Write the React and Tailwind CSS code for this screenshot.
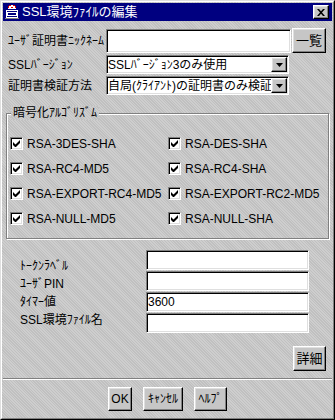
import React from "react";

const raised =
  "bg-[#c6c6c6] border border-t-white border-l-white border-r-black border-b-black shadow-[inset_-1px_-1px_0_#808080,inset_1px_1px_0_#dfdfdf]";
const sunken =
  "bg-white border border-t-[#808080] border-l-[#808080] border-r-white border-b-white shadow-[inset_1px_1px_0_#000,inset_-1px_-1px_0_#dfdfdf]";
const texture =
  "bg-[#c6c6c6] bg-[repeating-linear-gradient(45deg,#c0c0c0_0px,#c0c0c0_1px,#cecece_1px,#cecece_2px)]";

const ciphers = [
  ["RSA-3DES-SHA", "RSA-DES-SHA"],
  ["RSA-RC4-MD5", "RSA-RC4-SHA"],
  ["RSA-EXPORT-RC4-MD5", "RSA-EXPORT-RC2-MD5"],
  ["RSA-NULL-MD5", "RSA-NULL-SHA"],
];

const TitleIcon = () => (
  <svg width="16" height="16" viewBox="0 0 16 16" shapeRendering="crispEdges">
    <path d="M5 1h6v1h1v3H4V2h1z" fill="#fff" />
    <path d="M5 1h2v1H5zM9 1h2v1H9zM4 2h1v2H4zM11 2h1v2h-1zM7 3h2v1H7z" fill="#e00000" />
    <rect x="2" y="5" width="12" height="9" fill="#fff" />
    <rect x="2" y="5" width="12" height="1" fill="#000080" />
    <rect x="3" y="7" width="10" height="1" fill="#000080" />
    <rect x="4" y="9" width="8" height="2" fill="#000080" />
    <rect x="3" y="12" width="10" height="1" fill="#000080" />
    <rect x="1" y="14" width="14" height="1" fill="#808080" />
  </svg>
);

const Checkbox = ({ label }) => (
  <div className="flex items-center gap-[4px] h-[25px]">
    <div className={`w-[13px] h-[13px] ${sunken} flex items-center justify-center`}>
      <svg width="7" height="7" viewBox="0 0 7 7">
        <path d="M0 2v3l2 2h1l4-4V0L2.5 4.5z" fill="#000" />
      </svg>
    </div>
    <span className="text-[12px] leading-[14px] text-black">{label}</span>
  </div>
);

const Select = ({ value }) => (
  <div className={`w-[183px] h-[19px] ${sunken} flex items-center pl-[1px] pr-[1px]`}>
    <span className="flex-1 text-[12px] leading-[14px] whitespace-nowrap overflow-hidden">{value}</span>
    <div className={`w-[16px] h-[15px] ${raised} flex items-center justify-center shrink-0`}>
      <svg width="7" height="4" viewBox="0 0 7 4">
        <path d="M0 0h7L3.5 4z" fill="#000" />
      </svg>
    </div>
  </div>
);

export default function App() {
  return (
    <div className="w-[335px] h-[420px] border border-t-[#dfdfdf] border-l-[#dfdfdf] border-r-black border-b-black font-['Liberation_Sans','Noto_Sans_CJK_JP',sans-serif] text-black select-none">
      <div className={`h-full border border-t-white border-l-white border-r-[#808080] border-b-[#808080] p-px flex flex-col ${texture}`}>
        {/* title bar */}
        <div className="h-[18px] bg-[#000080] flex items-center pl-px pr-[3px]">
          <TitleIcon />
          <span className="ml-[2px] text-white text-[13px] leading-[14px] flex-1">SSL環境ﾌｧｲﾙの編集</span>
          <div className={`w-[16px] h-[14px] ${raised} flex items-center justify-center`}>
            <svg width="8" height="7" viewBox="0 0 8 7">
              <path d="M0 0h2l2 2.2L6 0h2L5 3.5 8 7H6L4 4.8 2 7H0l3-3.5z" fill="#000" />
            </svg>
          </div>
        </div>

        {/* top form */}
        <div className="pl-[5px] mt-[7px] flex flex-col gap-[2px]">
          <div className="flex items-center h-[25px]">
            <span className="w-[98px] text-[12px] leading-[14px] whitespace-nowrap">ﾕｰｻﾞ証明書ﾆｯｸﾈｰﾑ</span>
            <div className={`w-[185px] h-[24px] ${sunken}`} />
            <button className={`ml-[1px] w-[34px] h-[25px] ${raised} text-[13px] leading-[14px]`}>一覧</button>
          </div>
          <div className="flex items-center h-[19px]">
            <span className="w-[98px] text-[12px] leading-[14px] whitespace-nowrap">SSLﾊﾞｰｼﾞｮﾝ</span>
            <Select value="SSLﾊﾞｰｼﾞｮﾝ3のみ使用" />
          </div>
          <div className="flex items-center h-[19px]">
            <span className="w-[98px] text-[12px] leading-[14px] whitespace-nowrap">証明書検証方法</span>
            <Select value="自局(ｸﾗｲｱﾝﾄ)の証明書のみ検証" />
          </div>
        </div>

        {/* cipher group */}
        <fieldset className="mt-[11px] ml-[3px] w-[323px] border border-[#808080] shadow-[1px_1px_0_#fff,inset_1px_1px_0_#fff] pl-[3px] pt-[11px] pb-[7px]">
          <legend className={`ml-[1px] px-[2px] text-[12px] leading-[14px] ${texture}`}>暗号化ｱﾙｺﾞﾘｽﾞﾑ</legend>
          <div className="grid grid-cols-[158px_1fr]">
            {ciphers.map(([a, b]) => (
              <React.Fragment key={a}>
                <Checkbox label={a} />
                <Checkbox label={b} />
              </React.Fragment>
            ))}
          </div>
        </fieldset>

        {/* token fields */}
        <div className="mt-[11px] flex">
          <div className="w-[143px] pl-[17px] pt-[7px] flex flex-col text-[12px] leading-[18px]">
            <span>ﾄｰｸﾝﾗﾍﾞﾙ</span>
            <span>ﾕｰｻﾞPIN</span>
            <span>ﾀｲﾏｰ値</span>
            <span>SSL環境ﾌｧｲﾙ名</span>
          </div>
          <div className="flex flex-col gap-[1px]">
            <div className={`w-[163px] h-[20px] ${sunken}`} />
            <div className={`w-[163px] h-[20px] ${sunken}`} />
            <div className={`w-[163px] h-[20px] ${sunken} flex items-center pl-[1px] text-[12px] leading-[14px]`}>3600</div>
            <div className={`w-[163px] h-[20px] ${sunken}`} />
          </div>
        </div>

        <div className="flex justify-end mt-[13px] pr-[6px]">
          <button className={`w-[33px] h-[25px] ${raised} text-[13px] leading-[14px]`}>詳細</button>
        </div>

        <div className="mt-[7px] h-[2px] border-t border-t-[#808080] border-b border-b-white" />

        <div className="mt-[7px] flex justify-center gap-[11px]">
          <button className={`w-[24px] h-[24px] ${raised} text-[12px] leading-[14px]`}>OK</button>
          <button className={`w-[40px] h-[24px] ${raised} text-[12px] leading-[14px]`}>ｷｬﾝｾﾙ</button>
          <button className={`w-[33px] h-[24px] ${raised} text-[12px] leading-[14px]`}>ﾍﾙﾌﾟ</button>
        </div>
      </div>
    </div>
  );
}
